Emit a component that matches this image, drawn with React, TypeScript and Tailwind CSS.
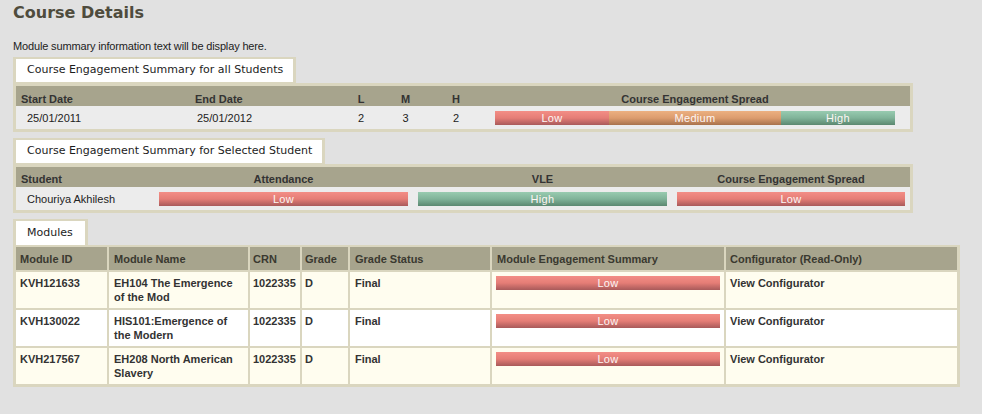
import React from "react";

type Level = "Low" | "Medium" | "High";

const barStyles: Record<Level, string> = {
  Low: "bg-linear-to-b from-[#f38e86] via-[#e57d76] to-[#a95a5a]",
  Medium: "bg-linear-to-b from-[#ecb081] via-[#dc9c6e] to-[#a8724c]",
  High: "bg-linear-to-b from-[#98cbb0] via-[#80b399] to-[#5b8870]",
};

function Bar({ level, className = "" }: { level: Level; className?: string }) {
  return (
    <div
      className={`h-[14px] flex items-center justify-center text-[11px] leading-[14px] text-[#fdf6f4] tracking-[0.3px] ${barStyles[level]} ${className}`}
    >
      {level}
    </div>
  );
}

function Tab({ label, width, tall = false }: { label: string; width: string; tall?: boolean }) {
  return (
    <div className={`w-fit bg-[#dad6bf] px-[3px] pt-[2px] ${tall ? "pb-0" : "pb-[1px]"}`}>
      <div
        className={`${width} ${tall ? "h-[24px]" : "h-[23px]"} bg-white pl-[11px] flex items-center font-['DejaVu_Sans',Verdana,sans-serif] text-[11px] text-[#1c1c1c] whitespace-nowrap`}
      >
        {label}
      </div>
    </div>
  );
}

const modules = [
  { id: "KVH121633", name: ["EH104 The Emergence", "of the Mod"], bg: "bg-[#fffdef]" },
  { id: "KVH130022", name: ["HIS101:Emergence of", "the Modern"], bg: "bg-white" },
  { id: "KVH217567", name: ["EH208 North American", "Slavery"], bg: "bg-[#fffdef]" },
];

export default function App() {
  return (
    <div className="min-h-screen w-full bg-[#e1e1e1] pl-[13px] pt-[3px] font-['Liberation_Sans',Arial,sans-serif] text-[#222]">
      <h1 className="font-['DejaVu_Sans',Verdana,sans-serif] font-bold text-[16px] leading-[20px] text-[#4f4c3d]">
        Course Details
      </h1>
      <p className="mt-[16px] text-[11px] leading-[14px] tracking-[-0.15px] text-[#222]">
        Module summary information text will be display here.
      </p>

      {/* Section 1 */}
      <div className="mt-[4px] w-[900px]">
        <Tab label="Course Engagement Summary for all Students" width="w-[277px]" />
        <div className="bg-[#dad6bf] p-[3px]">
          <div className="grid grid-cols-[174px_163px_16px_73px_28px_1fr] h-[20px] bg-[#a7a48d] text-[11px] leading-[14px] font-bold text-[#333] pt-[6px]">
            <div className="pl-[5px]">Start Date</div>
            <div className="pl-[5px]">End Date</div>
            <div className="text-center">L</div>
            <div className="text-center">M</div>
            <div className="text-center">H</div>
            <div className="pl-[25px] pr-[15px] text-center">Course Engagement Spread</div>
          </div>
          <div className="grid grid-cols-[174px_163px_16px_73px_28px_1fr] h-[23px] bg-[#ececec] text-[11px] leading-[14px] items-center">
            <div className="pl-[11px]">25/01/2011</div>
            <div className="pl-[7px]">25/01/2012</div>
            <div className="text-center">2</div>
            <div className="text-center">3</div>
            <div className="text-center">2</div>
            <div className="pl-[25px] pr-[15px] flex">
              <Bar level="Low" className="w-[114px]" />
              <Bar level="Medium" className="w-[172px]" />
              <Bar level="High" className="w-[114px]" />
            </div>
          </div>
        </div>
      </div>

      {/* Section 2 */}
      <div className="mt-[6px] w-[900px]">
        <Tab label="Course Engagement Summary for Selected Student" width="w-[306px]" />
        <div className="bg-[#dad6bf] p-[3px]">
          <div className="grid grid-cols-[138px_259px_259px_1fr] h-[20px] bg-[#a7a48d] text-[11px] leading-[14px] font-bold text-[#333] pt-[5px]">
            <div className="pl-[5px]">Student</div>
            <div className="text-center">Attendance</div>
            <div className="text-center">VLE</div>
            <div className="text-center">Course Engagement Spread</div>
          </div>
          <div className="grid grid-cols-[138px_259px_259px_1fr] h-[23px] bg-[#ececec] text-[11px] leading-[14px] items-center">
            <div className="pl-[11px]">Chouriya Akhilesh</div>
            <div className="px-[5px]">
              <Bar level="Low" />
            </div>
            <div className="px-[5px]">
              <Bar level="High" />
            </div>
            <div className="px-[5px]">
              <Bar level="Low" />
            </div>
          </div>
        </div>
      </div>

      {/* Modules */}
      <div className="mt-[6px] w-[947px]">
        <Tab label="Modules" width="w-[69px]" tall />
        <div className="bg-[#dad6bf] px-[3px] pt-[2px] pb-[3px]">
          <div className="grid grid-cols-[91px_139px_50px_46px_140px_232px_231px] gap-[2px] text-[11px] leading-[14px] font-bold">
            {[
              ["Module ID", "pl-[4px]"],
              ["Module Name", "pl-[5px]"],
              ["CRN", "pl-[3px]"],
              ["Grade", "pl-[3px]"],
              ["Grade Status", "pl-[5px]"],
              ["Module Engagement Summary", "pl-[5px]"],
              ["Configurator (Read-Only)", "pl-[4px]"],
            ].map(([h, pad]) => (
              <div key={h} className={`h-[23px] bg-[#a7a48d] text-[#3a3930] flex items-center whitespace-nowrap ${pad}`}>
                {h}
              </div>
            ))}
            {modules.map((m) => (
              <React.Fragment key={m.id}>
                <div className={`h-[36px] ${m.bg} pl-[4px] pt-[4px] text-[#333]`}>{m.id}</div>
                <div className={`h-[36px] ${m.bg} pl-[5px] pt-[4px] text-[#333] whitespace-nowrap`}>
                  {m.name[0]}
                  <br />
                  {m.name[1]}
                </div>
                <div className={`h-[36px] ${m.bg} pl-[3px] pt-[4px] text-[#333]`}>1022335</div>
                <div className={`h-[36px] ${m.bg} pl-[3px] pt-[4px] text-[#333]`}>D</div>
                <div className={`h-[36px] ${m.bg} pl-[5px] pt-[4px] text-[#333]`}>Final</div>
                <div className={`h-[36px] ${m.bg} px-[4px] pt-[4px] font-normal`}>
                  <Bar level="Low" />
                </div>
                <div className={`h-[36px] ${m.bg} pl-[4px] pt-[4px] text-[#333]`}>View Configurator</div>
              </React.Fragment>
            ))}
          </div>
        </div>
      </div>
    </div>
  );
}
